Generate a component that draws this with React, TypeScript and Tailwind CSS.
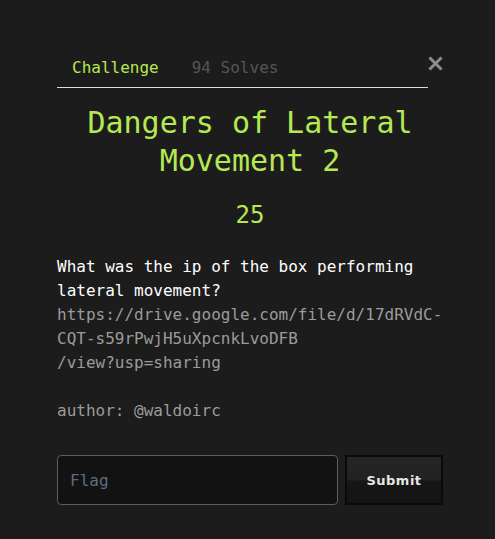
export default function App() {
  return (
    <div className="min-h-[539px] bg-[#1c1c1c] px-[57px] pt-[48px] font-['DejaVu_Sans_Mono',monospace]">
      <div className="flex w-[386px] items-start">
        <ul className="flex w-[371px] shrink-0 border-b border-[#dcdcdc]">
          <li className="px-[15px] pt-[8px] pb-[7px] text-[16px] leading-6 text-[#b5e853]">Challenge</li>
          <li className="ml-[3px] px-[15px] pt-[8px] pb-[7px] text-[16px] leading-6 text-[#555]">94 Solves</li>
        </ul>
        <button className="mt-[8px] ml-[0px] shrink-0 text-[#8c8c8c]">
          <svg width="15" height="15" viewBox="0 0 15 15">
            <path d="M2.5 2.5 L12.5 12.5 M12.5 2.5 L2.5 12.5" stroke="currentColor" strokeWidth="3" strokeLinecap="square" />
          </svg>
        </button>
      </div>

      <h3 className="mt-[16px] w-[386px] text-center text-[30px] leading-[38px] text-[#b5e853]">
        Dangers of Lateral Movement 2
      </h3>
      <h4 className="mt-[19px] w-[386px] text-center text-[24px] leading-8 text-[#b5e853]">25</h4>

      <div className="mt-[24px] w-[386px] text-[16px] leading-6">
        <p className="text-white">What was the ip of the box performing lateral movement?</p>
        <p className="text-[#9b9b9b]">
          <span className="block">https://drive.google.com/file/d/17dRVdC-</span>
          <span className="block">CQT-s59rPwjH5uXpcnkLvoDFB</span>
          <span className="block">/view?usp=sharing</span>
        </p>
        <p className="mt-6 text-[#9b9b9b]">author: @waldoirc</p>
      </div>

      <div className="mt-[32px] flex w-[386px] gap-[7px]">
        <input
          placeholder="Flag"
          className="h-[50px] w-[281px] rounded-[4px] border border-[#5c5c5c] bg-[#121212] px-[12px] text-[16px] text-white outline-none placeholder:text-[#5d6d80] font-['DejaVu_Sans_Mono',monospace]"
        />
        <button className="h-[50px] flex-1 border-2 border-[#0a0a0a] bg-[linear-gradient(#252525_0%,#222_50%,#161616_52%,#141414_100%)] pt-[2px] font-['DejaVu_Sans',sans-serif] text-[13px] font-bold tracking-[0.5px] text-[#e6e6e6]">
          Submit
        </button>
      </div>
    </div>
  );
}
